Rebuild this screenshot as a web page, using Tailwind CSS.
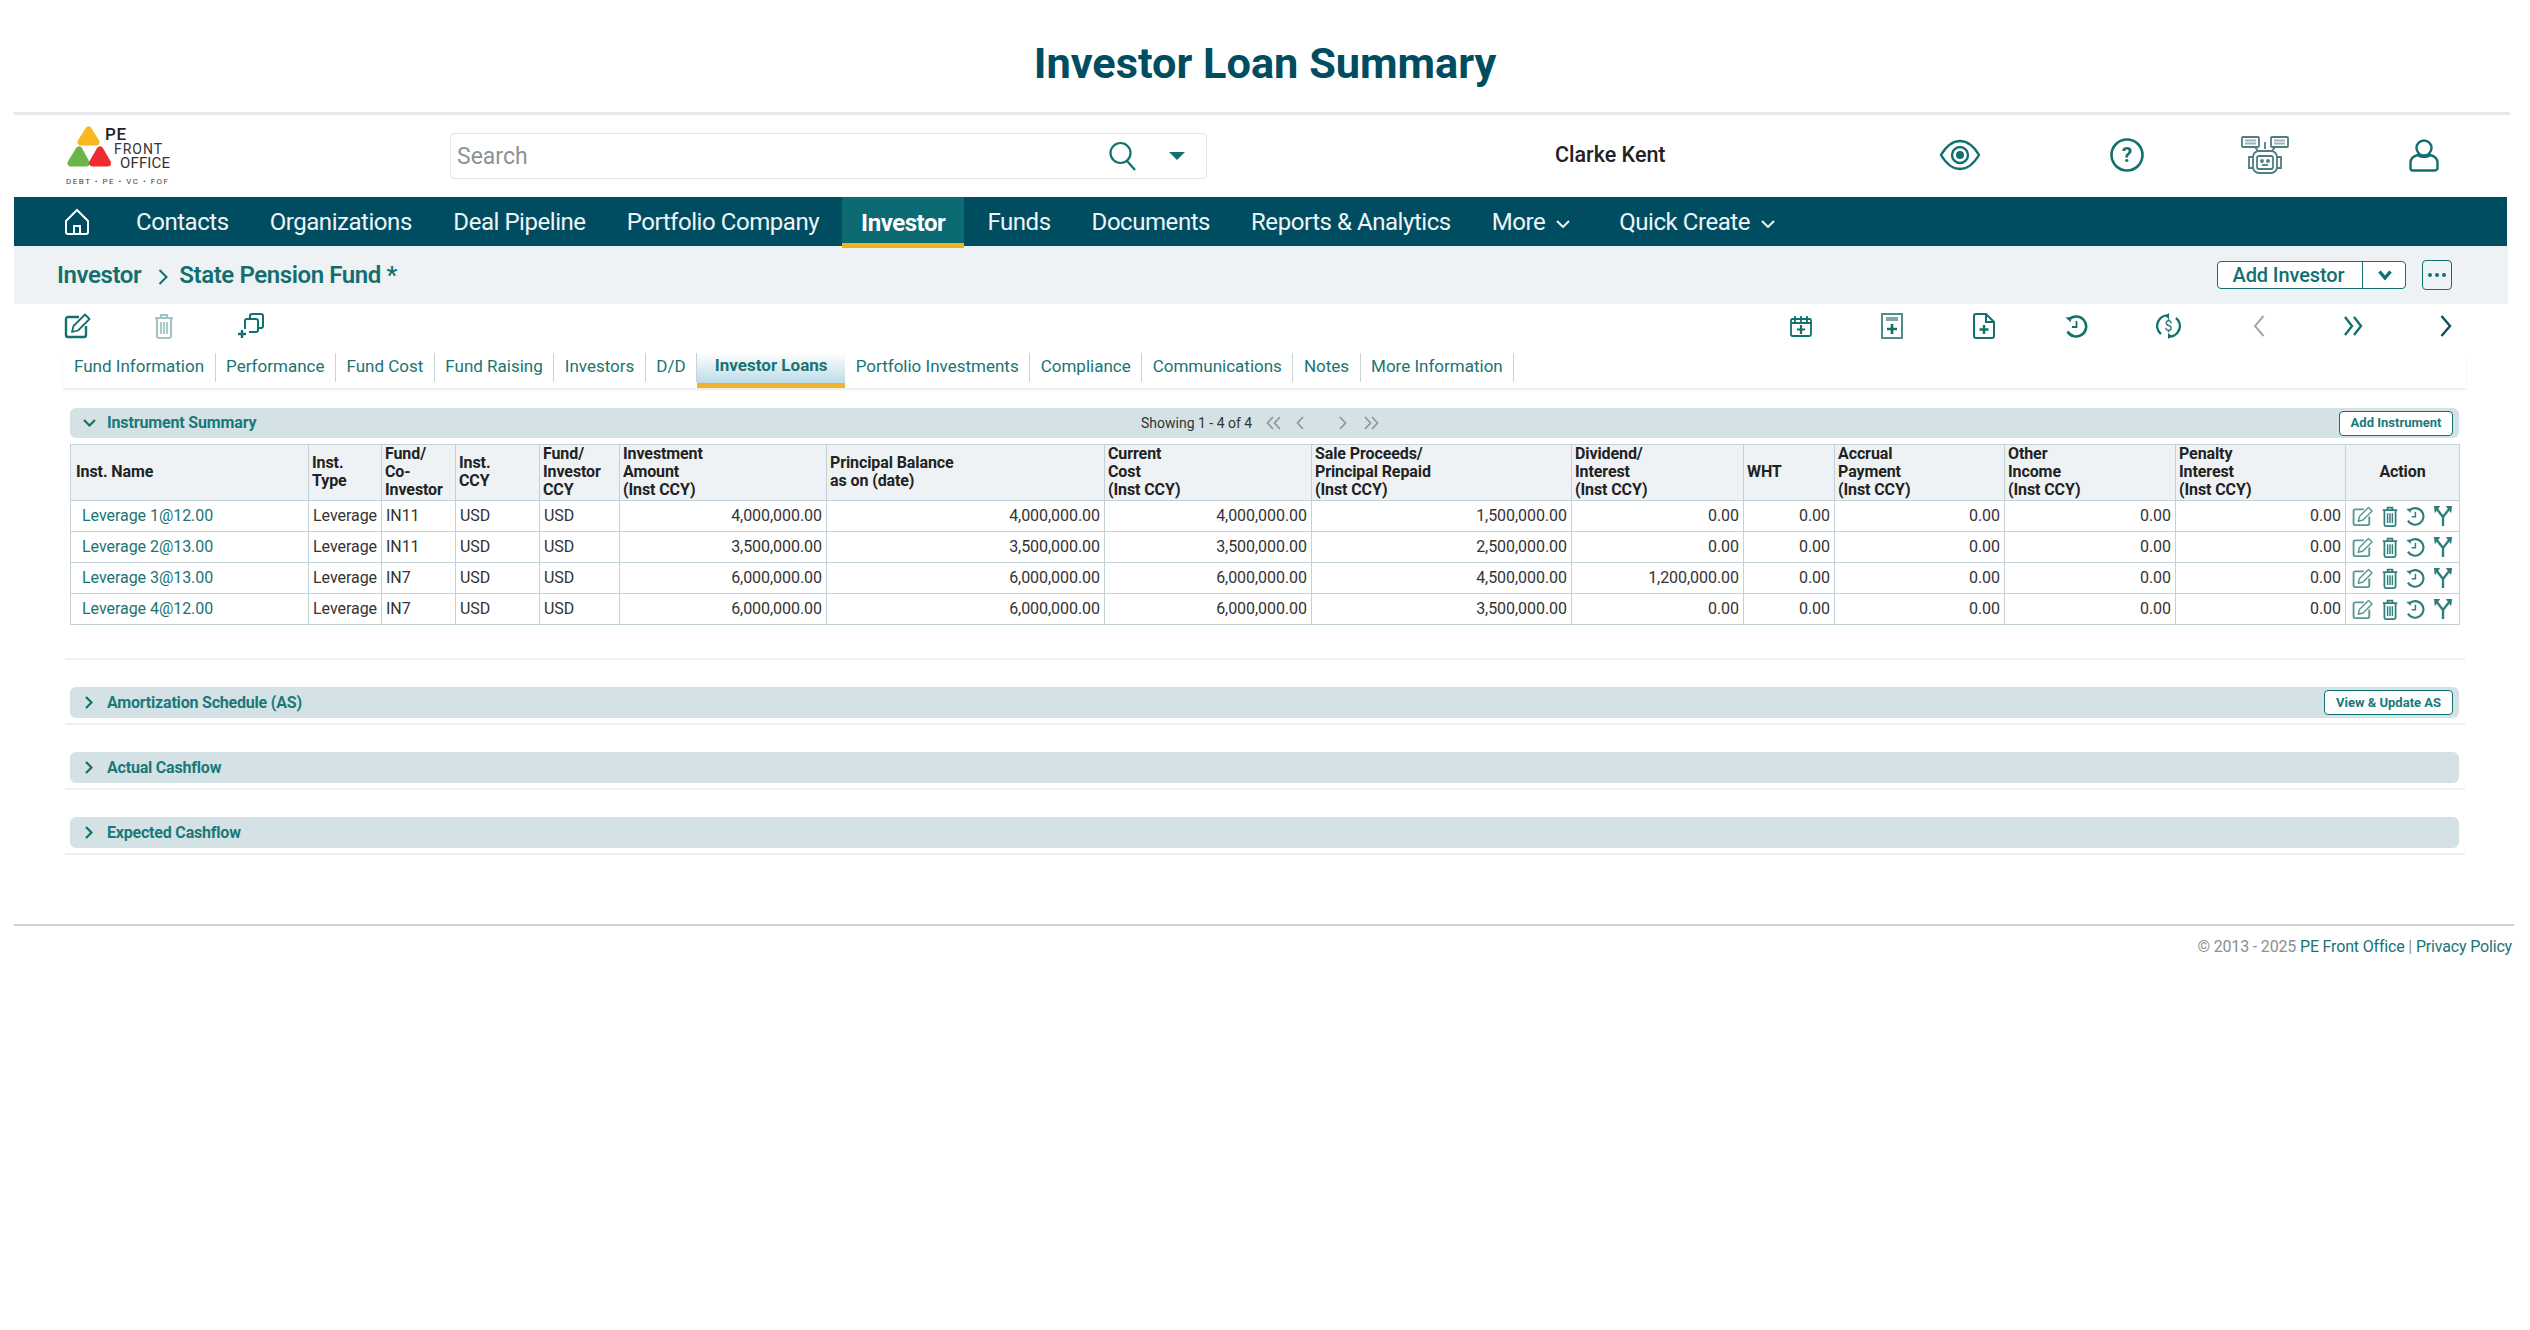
<!DOCTYPE html>
<html lang="en">
<head>
  <meta charset="UTF-8" />
  <title>Investor Loan Summary</title>
  <script src="https://cdn.jsdelivr.net/npm/@tailwindcss/browser@4"></script>
</head>
<body class="bg-white font-[Roboto,sans-serif] text-[#222]">

  <!-- shared action icons -->
  <svg class="hidden">
    <symbol id="i-edit" viewBox="0 0 28 26">
      <path d="M15 4H4a2 2 0 0 0-2 2v16a2 2 0 0 0 2 2h16a2 2 0 0 0 2-2V13" fill="none" stroke="currentColor" stroke-width="2.400"/>
      <path d="M8 19l1.500-6L21 1.500l4.500 4.500L14 17.500z" fill="none" stroke="currentColor" stroke-width="1.800" stroke-linejoin="round"/>
    </symbol>
    <symbol id="i-trash" viewBox="0 0 20 26">
      <path d="M1 5h18M7 5V2h6v3M3 5.500V23a2 2 0 0 0 2 2h10a2 2 0 0 0 2-2V5.500" fill="none" stroke="currentColor" stroke-width="2.200"/>
      <path d="M7 9v12M10 9v12M13 9v12" stroke="currentColor" stroke-width="1.800"/>
    </symbol>
    <symbol id="i-history" viewBox="0 0 24 24">
      <path d="M5 5.500A10 10 0 1 1 3.500 17.500" fill="none" stroke="currentColor" stroke-width="2.600"/>
      <path d="M1.500 3.500l5-.5.500 5.500z" fill="currentColor"/>
      <path d="M12.500 7v6H8" fill="none" stroke="currentColor" stroke-width="1.800"/>
    </symbol>
    <symbol id="i-fork" viewBox="0 0 22 24">
      <path d="M11 23V13L4 4M11 13l7-9" fill="none" stroke="currentColor" stroke-width="2.600"/>
      <path d="M1 1h7L2 9zM21 1h-7l6 8z" fill="currentColor"/>
    </symbol>
  </svg>

  <div class="w-[2496px] ml-[14px]">

    <h1 class="h-[112px] pt-[16px] pl-[6px] flex items-center justify-center text-[43.300px] font-bold text-[#004d61]">Investor Loan Summary</h1>

    <!-- top header -->
    <header class="h-[85px] border-t-[3px] border-[#e6e8ea] flex items-center relative">
      <svg class="w-[106px] h-[62px] ml-[52px] shrink-0 overflow-visible" viewBox="0 0 106 62" font-family="Roboto, sans-serif">
        <path d="M22.500 5L15 17h15z" fill="#f9b81f" stroke="#f9b81f" stroke-width="7" stroke-linejoin="round"/>
        <path d="M13 25L5 38h15z" fill="#6ab54a" stroke="#6ab54a" stroke-width="7" stroke-linejoin="round"/>
        <path d="M34 25l-7.500 13h15z" fill="#ee2b2f" stroke="#ee2b2f" stroke-width="7" stroke-linejoin="round"/>
        <text x="39" y="15" font-size="17" font-weight="500" fill="#222" textLength="21">PE</text>
        <text x="48" y="29" font-size="14" fill="#333" textLength="48">FRONT</text>
        <text x="54" y="43" font-size="15" fill="#333" textLength="50">OFFICE</text>
        <text x="0" y="59" font-size="8" fill="#444" textLength="102">DEBT • PE • VC • FOF</text>
      </svg>

      <div class="ml-[278px] w-[757px] h-[46px] border border-[#e2e6e8] rounded-[4px] flex items-center pl-[6px] pr-[21px] shrink-0">
        <span class="flex-1 pt-[2px] text-[23px] text-[#8d9296]">Search</span>
        <svg class="w-[30px] h-[30px] shrink-0 text-[#12706f]" viewBox="0 0 30 30" fill="none" stroke="currentColor" stroke-width="2.200"><circle cx="12.500" cy="12" r="10"/><path d="M19 20l8 9"/></svg>
        <svg class="w-[16px] h-[8px] ml-[31px] shrink-0 text-[#12706f]" viewBox="0 0 16 8"><path d="M0 0h16L8 8z" fill="currentColor"/></svg>
      </div>

      <span class="ml-[348px] mb-[2px] text-[21.500px] font-medium whitespace-nowrap">Clarke Kent</span>

      <svg class="absolute left-[1925px] top-[24px] w-[42px] h-[32px] text-[#12706f]" viewBox="0 0 42 32" fill="none" stroke="currentColor" stroke-width="2.400"><path d="M2 16C8 6 14 2 21 2s13 4 19 14c-6 10-12 14-19 14S8 26 2 16z"/><circle cx="21" cy="16" r="8"/><circle cx="21" cy="16" r="4" fill="currentColor" stroke="none"/></svg>
      <svg class="absolute left-[2096px] top-[23px] w-[34px] h-[34px] text-[#12706f]" viewBox="0 0 34 34"><circle cx="17" cy="17" r="15.500" fill="none" stroke="currentColor" stroke-width="2.600"/><text x="17" y="24" text-anchor="middle" font-size="21" font-weight="700" fill="currentColor" font-family="Roboto, sans-serif">?</text></svg>
      <svg class="absolute left-[2227px] top-[21px] w-[48px] h-[38px] text-[#4f7d80]" viewBox="0 0 48 38" fill="none" stroke="currentColor" stroke-width="1.800">
        <rect x="1" y="1" width="17" height="10" rx="1"/><rect x="30" y="1" width="17" height="10" rx="1"/>
        <path d="M4 4.500h11M4 7.500h11M33 4.500h11M33 7.500h11" stroke-width="2" stroke="#9ab5b7"/>
        <path d="M14 11l3 4M34 11l-3 4M24 6v7"/>
        <rect x="12" y="15" width="24" height="22" rx="6"/><rect x="16" y="20" width="16" height="13" rx="2"/>
        <path d="M12 21H8v11h4M36 21h4v11h-4"/>
        <circle cx="21" cy="25" r="1" fill="currentColor"/><circle cx="27" cy="25" r="1" fill="currentColor"/><path d="M21 29h6"/>
      </svg>
      <svg class="absolute left-[2395px] top-[23px] w-[30px] h-[34px] text-[#12706f]" viewBox="0 0 30 34" fill="none" stroke="currentColor" stroke-width="2.400"><circle cx="15" cy="10" r="7.500"/><path d="M9 17C4 18 1.500 21 1.500 25v5a2.500 2.500 0 0 0 2.500 2.500h22a2.500 2.500 0 0 0 2.500-2.500v-5c0-4-2.500-7-7.500-8-2 2.500-10 2.500-12 0z"/></svg>
    </header>

    <!-- main nav -->
    <nav class="w-[2493px] h-[49px] bg-[#004d61] flex items-center pl-[50px] text-[24px] text-[#eef5f6] tracking-[-0.45px] whitespace-nowrap">
      <svg class="w-[26px] h-[28px] text-white" viewBox="0 0 26 28" fill="none" stroke="currentColor" stroke-width="2"><path d="M2 13L13 2l11 11v11a2 2 0 0 1-2 2H4a2 2 0 0 1-2-2z"/><path d="M10 26v-8h6v8"/></svg>
      <a class="ml-[46px]">Contacts</a>
      <a class="ml-[41px]">Organizations</a>
      <a class="ml-[41.500px]">Deal Pipeline</a>
      <a class="ml-[41px]">Portfolio Company</a>
      <a class="ml-[23px] h-[51px] px-[19px] pt-[8px] self-start bg-[#0b6a72] border-b-[5px] border-[#f6b21b] font-bold text-white">Investor</a>
      <a class="ml-[23px]">Funds</a>
      <a class="ml-[41px]">Documents</a>
      <a class="ml-[41px]">Reports &amp; Analytics</a>
      <a class="ml-[41px]">More</a>
      <svg class="w-[14px] h-[8px] ml-[11px] mt-[4px]" viewBox="0 0 14 8" fill="none" stroke="currentColor" stroke-width="2"><path d="M1 1l6 6 6-6"/></svg>
      <a class="ml-[49px]">Quick Create</a>
      <svg class="w-[14px] h-[8px] ml-[11px] mt-[4px]" viewBox="0 0 14 8" fill="none" stroke="currentColor" stroke-width="2"><path d="M1 1l6 6 6-6"/></svg>
    </nav>

    <!-- breadcrumb -->
    <div class="w-[2494px] h-[58px] bg-[#eef2f5] flex items-center pl-[43px] text-[24px] font-semibold text-[#136f6f] tracking-[-0.4px]">
      <span>Investor</span>
      <svg class="w-[10px] h-[16px] ml-[17px] mt-[3px]" viewBox="0 0 10 16" fill="none" stroke="currentColor" stroke-width="2"><path d="M1.500 1l7 7-7 7"/></svg>
      <span class="ml-[11px]">State Pension Fund *</span>
      <div class="ml-auto flex items-center">
        <div class="w-[189px] h-[28px] bg-white border border-[#12706f] rounded-[4px] flex items-center text-[20px] font-medium tracking-[-0.1px]">
          <span class="w-[145px] pr-[3px] text-center border-r border-[#12706f] h-full leading-[26px]">Add Investor</span>
          <svg class="w-[14px] h-[10px] ml-[15px]" viewBox="0 0 14 10" fill="none" stroke="currentColor" stroke-width="3.400"><path d="M1.500 1.500L7 8l5.500-6.500"/></svg>
        </div>
        <div class="ml-[16px] mr-[56px] w-[30px] h-[30px] border border-[#12706f] rounded-[4px] flex items-center justify-center gap-[3px]">
          <i class="w-[4px] h-[4px] rounded-full bg-[#12706f]"></i><i class="w-[4px] h-[4px] rounded-full bg-[#12706f]"></i><i class="w-[4px] h-[4px] rounded-full bg-[#12706f]"></i>
        </div>
      </div>
    </div>

    <!-- toolbar -->
    <div class="h-[49px] pb-[6px] flex items-center text-[#12706f]">
      <svg class="w-[28px] h-[26px] ml-[50px]"><use href="#i-edit"/></svg>
      <svg class="w-[20px] h-[26px] ml-[62px] opacity-40"><use href="#i-trash"/></svg>
      <svg class="w-[28px] h-[26px] ml-[62px]" viewBox="0 0 28 26" fill="none" stroke="currentColor" stroke-width="2"><path d="M9 16V8a2 2 0 0 1 2-2h9a2 2 0 0 1 2 2v9a2 2 0 0 1-2 2h-7"/><path d="M14 6V3a2 2 0 0 1 2-2h9a2 2 0 0 1 2 2v10a2 2 0 0 1-2 2h-3"/><path d="M6 17v8M2 21h8" stroke-width="2.400"/></svg>

      <svg class="w-[22px] h-[22px] ml-[1526px]" viewBox="0 0 22 22" fill="none" stroke="currentColor" stroke-width="1.800"><rect x="1" y="4" width="20" height="17" rx="1.500"/><path d="M1 8h20M5 1v6M11 1v6M17 1v6"/><path d="M11 10v9M7 14.500h8" stroke-width="2.200"/></svg>
      <svg class="w-[22px] h-[26px] ml-[69px]" viewBox="0 0 22 26" fill="none" stroke="#4f8c8c" stroke-width="2"><rect x="1" y="1" width="20" height="24"/><rect x="5" y="4" width="12" height="4" fill="#7fa8a8" stroke="none"/><path d="M11 11v10M6 16h10" stroke="#12706f" stroke-width="2.600"/></svg>
      <svg class="w-[22px] h-[26px] ml-[70px]" viewBox="0 0 22 26" fill="none" stroke="currentColor" stroke-width="2"><path d="M13 1H3a2 2 0 0 0-2 2v20a2 2 0 0 0 2 2h16a2 2 0 0 0 2-2V9zM13 1v8h8"/><path d="M11 12v9M6.500 16.500h9" stroke-width="2.400"/></svg>
      <svg class="w-[24px] h-[24px] ml-[69px]"><use href="#i-history"/></svg>
      <svg class="w-[25px] h-[26px] ml-[68px]" viewBox="0 0 25 26" fill="none" stroke="currentColor" stroke-width="2.400"><path d="M5 21A10.500 10.500 0 0 1 13 2.500M20 5a10.500 10.500 0 0 1-8 18.500"/><path d="M13 0l-4 3 4 3zM12 26l4-3-4-3z" fill="currentColor" stroke="none"/><text x="12.500" y="18" text-anchor="middle" font-size="14" fill="currentColor" stroke="none" font-family="Roboto, sans-serif">$</text></svg>
      <svg class="w-[12px] h-[22px] ml-[72px] text-[#a0a8ae]" viewBox="0 0 12 22" fill="none" stroke="currentColor" stroke-width="2"><path d="M10.500 1L2 11l8.500 10"/></svg>
      <svg class="w-[20px] h-[20px] ml-[78px]" viewBox="0 0 20 20" fill="none" stroke="currentColor" stroke-width="2.400"><path d="M2 1l7 9-7 9M11 1l7 9-7 9"/></svg>
      <svg class="w-[12px] h-[22px] ml-[77px] text-[#0d4f60]" viewBox="0 0 12 22" fill="none" stroke="currentColor" stroke-width="2.400"><path d="M1.500 1L10 11 1.500 21"/></svg>
    </div>

    <!-- tabs -->
    <div class="ml-[49px] w-[2403px] h-[35px] shadow-[0_2px_2px_rgba(0,0,0,0.08)] flex items-start text-[17px] text-[#1a7474] whitespace-nowrap">
      <a class="h-[29px] pl-[11px] pr-[10.500px] border-r border-[#c9d3d6] leading-[27px]">Fund Information</a>
      <a class="h-[29px] px-[10.500px] border-r border-[#c9d3d6] leading-[27px]">Performance</a>
      <a class="h-[29px] px-[10.500px] border-r border-[#c9d3d6] leading-[27px]">Fund Cost</a>
      <a class="h-[29px] px-[10.500px] border-r border-[#c9d3d6] leading-[27px]">Fund Raising</a>
      <a class="h-[29px] px-[10.500px] border-r border-[#c9d3d6] leading-[27px]">Investors</a>
      <a class="h-[29px] px-[10.500px] border-r border-[#c9d3d6] leading-[27px]">D/D</a>
      <a class="h-[35px] w-[148px] text-center font-bold leading-[25px] bg-gradient-to-b from-white to-[#bcdbe6] border-b-[5px] border-[#f0b429]">Investor Loans</a>
      <a class="h-[29px] px-[10.500px] border-r border-[#c9d3d6] leading-[27px]">Portfolio Investments</a>
      <a class="h-[29px] px-[10.500px] border-r border-[#c9d3d6] leading-[27px]">Compliance</a>
      <a class="h-[29px] px-[10.500px] border-r border-[#c9d3d6] leading-[27px]">Communications</a>
      <a class="h-[29px] px-[10.500px] border-r border-[#c9d3d6] leading-[27px]">Notes</a>
      <a class="h-[29px] px-[10.500px] border-r border-[#c9d3d6] leading-[27px]">More Information</a>
    </div>

    <!-- instrument summary -->
    <section class="ml-[56px] w-[2389px] mt-[20px]">
      <div class="h-[30px] bg-[#d5e2e5] rounded-[6px] flex items-center relative">
        <svg class="w-[13px] h-[8px] ml-[13px] text-[#12706f]" viewBox="0 0 13 8" fill="none" stroke="currentColor" stroke-width="2.200"><path d="M1 1l5.500 5.500L12 1"/></svg>
        <span class="ml-[11px] text-[16px] font-bold tracking-[-0.15px] text-[#18797b]">Instrument Summary</span>
        <div class="absolute left-[1071px] top-0 h-full flex items-center text-[14px] text-[#333]">
          <span class="w-[116px]">Showing 1 - 4 of 4</span>
          <svg class="w-[15px] h-[14px] ml-[9px] text-[#8a9ba2]" viewBox="0 0 15 14" fill="none" stroke="currentColor" stroke-width="1.800"><path d="M7 1L1.500 7 7 13M14 1L8.500 7l5.500 6"/></svg>
          <svg class="w-[8px] h-[14px] ml-[15px] text-[#8a9ba2]" viewBox="0 0 8 14" fill="none" stroke="currentColor" stroke-width="1.800"><path d="M7 1L1.500 7 7 13"/></svg>
          <svg class="w-[8px] h-[14px] ml-[35px] text-[#8a9ba2]" viewBox="0 0 8 14" fill="none" stroke="currentColor" stroke-width="1.800"><path d="M1 1l5.500 6L1 13"/></svg>
          <svg class="w-[15px] h-[14px] ml-[17px] text-[#8a9ba2]" viewBox="0 0 15 14" fill="none" stroke="currentColor" stroke-width="1.800"><path d="M1 1l5.500 6L1 13M8 1l5.500 6L8 13"/></svg>
        </div>
        <button class="ml-auto mr-[6px] w-[114px] h-[25px] bg-white border border-[#12706f] rounded-[4px] text-[13px] font-bold text-[#18797b]">Add Instrument</button>
      </div>

      <table class="mt-[6px] w-[2389px] table-fixed border-collapse text-[16px] tracking-[-0.05px] text-[#333] [&_th]:border [&_th]:border-[#c3d2d6] [&_th]:bg-[#eef2f5] [&_th]:px-[3px] [&_th]:pb-[1px] [&_th]:text-left [&_th]:font-bold [&_th]:leading-[18px] [&_th]:tracking-[-0.1px] [&_th]:text-[#222] [&_td]:border [&_td]:border-[#c3d2d6] [&_td]:h-[31px] [&_td]:px-[4px] [&_td]:py-0">
        <thead>
          <tr class="h-[55px]">
            <th class="w-[238px] !pl-[5px]">Inst. Name</th>
            <th class="w-[73px]">Inst.<br />Type</th>
            <th class="w-[74px]">Fund/<br />Co-<br />Investor</th>
            <th class="w-[84px]">Inst.<br />CCY</th>
            <th class="w-[80px]">Fund/<br />Investor<br />CCY</th>
            <th class="w-[207px]">Investment<br />Amount<br />(Inst CCY)</th>
            <th class="w-[278px]">Principal Balance<br />as on (date)</th>
            <th class="w-[207px]">Current<br />Cost<br />(Inst CCY)</th>
            <th class="w-[260px]">Sale Proceeds/<br />Principal Repaid<br />(Inst CCY)</th>
            <th class="w-[172px]">Dividend/<br />Interest<br />(Inst CCY)</th>
            <th class="w-[91px]">WHT</th>
            <th class="w-[170px]">Accrual<br />Payment<br />(Inst CCY)</th>
            <th class="w-[171px]">Other<br />Income<br />(Inst CCY)</th>
            <th class="w-[170px]">Penalty<br />Interest<br />(Inst CCY)</th>
            <th class="w-[114px] !text-center">Action</th>
          </tr>
        </thead>
        <tbody class="[&_td]:text-right [&_td:nth-child(-n+5)]:text-left">
          <tr>
            <td class="!pl-[11px] text-[#1a7474]">Leverage 1@12.00</td><td>Leverage</td><td>IN11</td><td>USD</td><td>USD</td>
            <td>4,000,000.00</td><td>4,000,000.00</td><td>4,000,000.00</td><td>1,500,000.00</td><td>0.00</td><td>0.00</td><td>0.00</td><td>0.00</td><td>0.00</td>
            <td class="!px-[6px] text-[#2e7f7c]"><div class="flex items-center justify-between"><svg class="w-[22px] h-[21px] opacity-80"><use href="#i-edit"/></svg><svg class="w-[16px] h-[21px]"><use href="#i-trash"/></svg><svg class="w-[20px] h-[20px]"><use href="#i-history"/></svg><svg class="w-[20px] h-[22px]"><use href="#i-fork"/></svg></div></td>
          </tr>
          <tr>
            <td class="!pl-[11px] text-[#1a7474]">Leverage 2@13.00</td><td>Leverage</td><td>IN11</td><td>USD</td><td>USD</td>
            <td>3,500,000.00</td><td>3,500,000.00</td><td>3,500,000.00</td><td>2,500,000.00</td><td>0.00</td><td>0.00</td><td>0.00</td><td>0.00</td><td>0.00</td>
            <td class="!px-[6px] text-[#2e7f7c]"><div class="flex items-center justify-between"><svg class="w-[22px] h-[21px] opacity-80"><use href="#i-edit"/></svg><svg class="w-[16px] h-[21px]"><use href="#i-trash"/></svg><svg class="w-[20px] h-[20px]"><use href="#i-history"/></svg><svg class="w-[20px] h-[22px]"><use href="#i-fork"/></svg></div></td>
          </tr>
          <tr>
            <td class="!pl-[11px] text-[#1a7474]">Leverage 3@13.00</td><td>Leverage</td><td>IN7</td><td>USD</td><td>USD</td>
            <td>6,000,000.00</td><td>6,000,000.00</td><td>6,000,000.00</td><td>4,500,000.00</td><td>1,200,000.00</td><td>0.00</td><td>0.00</td><td>0.00</td><td>0.00</td>
            <td class="!px-[6px] text-[#2e7f7c]"><div class="flex items-center justify-between"><svg class="w-[22px] h-[21px] opacity-80"><use href="#i-edit"/></svg><svg class="w-[16px] h-[21px]"><use href="#i-trash"/></svg><svg class="w-[20px] h-[20px]"><use href="#i-history"/></svg><svg class="w-[20px] h-[22px]"><use href="#i-fork"/></svg></div></td>
          </tr>
          <tr>
            <td class="!pl-[11px] text-[#1a7474]">Leverage 4@12.00</td><td>Leverage</td><td>IN7</td><td>USD</td><td>USD</td>
            <td>6,000,000.00</td><td>6,000,000.00</td><td>6,000,000.00</td><td>3,500,000.00</td><td>0.00</td><td>0.00</td><td>0.00</td><td>0.00</td><td>0.00</td>
            <td class="!px-[6px] text-[#2e7f7c]"><div class="flex items-center justify-between"><svg class="w-[22px] h-[21px] opacity-80"><use href="#i-edit"/></svg><svg class="w-[16px] h-[21px]"><use href="#i-trash"/></svg><svg class="w-[20px] h-[20px]"><use href="#i-history"/></svg><svg class="w-[20px] h-[22px]"><use href="#i-fork"/></svg></div></td>
          </tr>
        </tbody>
      </table>
    </section>

    <!-- collapsed sections -->
    <div class="ml-[51px] w-[2400px] h-[2px] mt-[33px] bg-[#eeeff0]"></div>

    <section class="ml-[51px] w-[2400px] mt-[27px] pb-[5px] border-b-2 border-[#eeeff0]">
      <div class="ml-[5px] w-[2389px] h-[31px] bg-[#d5e2e5] rounded-[6px] flex items-center">
        <svg class="w-[8px] h-[13px] ml-[15px] text-[#12706f]" viewBox="0 0 8 13" fill="none" stroke="currentColor" stroke-width="2.200"><path d="M1 1l5.500 5.500L1 12"/></svg>
        <span class="ml-[14px] text-[16px] font-bold tracking-[-0.2px] text-[#18797b]">Amortization Schedule (AS)</span>
        <button class="ml-auto mr-[6px] w-[129px] h-[25px] bg-white border border-[#12706f] rounded-[4px] text-[13px] font-bold text-[#18797b]">View &amp; Update AS</button>
      </div>
    </section>

    <section class="ml-[51px] w-[2400px] mt-[27px] pb-[5px] border-b-2 border-[#eeeff0]">
      <div class="ml-[5px] w-[2389px] h-[31px] bg-[#d5e2e5] rounded-[6px] flex items-center">
        <svg class="w-[8px] h-[13px] ml-[15px] text-[#12706f]" viewBox="0 0 8 13" fill="none" stroke="currentColor" stroke-width="2.200"><path d="M1 1l5.500 5.500L1 12"/></svg>
        <span class="ml-[14px] text-[16px] font-bold tracking-[-0.2px] text-[#18797b]">Actual Cashflow</span>
      </div>
    </section>

    <section class="ml-[51px] w-[2400px] mt-[27px] pb-[5px] border-b-2 border-[#eeeff0]">
      <div class="ml-[5px] w-[2389px] h-[31px] bg-[#d5e2e5] rounded-[6px] flex items-center">
        <svg class="w-[8px] h-[13px] ml-[15px] text-[#12706f]" viewBox="0 0 8 13" fill="none" stroke="currentColor" stroke-width="2.200"><path d="M1 1l5.500 5.500L1 12"/></svg>
        <span class="ml-[14px] text-[16px] font-bold tracking-[-0.2px] text-[#18797b]">Expected Cashflow</span>
      </div>
    </section>

    <!-- footer -->
    <footer class="mt-[69px] w-[2500px] border-t-2 border-[#ccd0d2] pt-[9px] pr-[2px] text-right text-[16px] tracking-[-0.17px] text-[#8a8f92]">
      © 2013 - 2025 <a class="text-[#1a7474]">PE Front Office</a> | <a class="text-[#1a7474]">Privacy Policy</a>
    </footer>
  </div>

</body>
</html>
